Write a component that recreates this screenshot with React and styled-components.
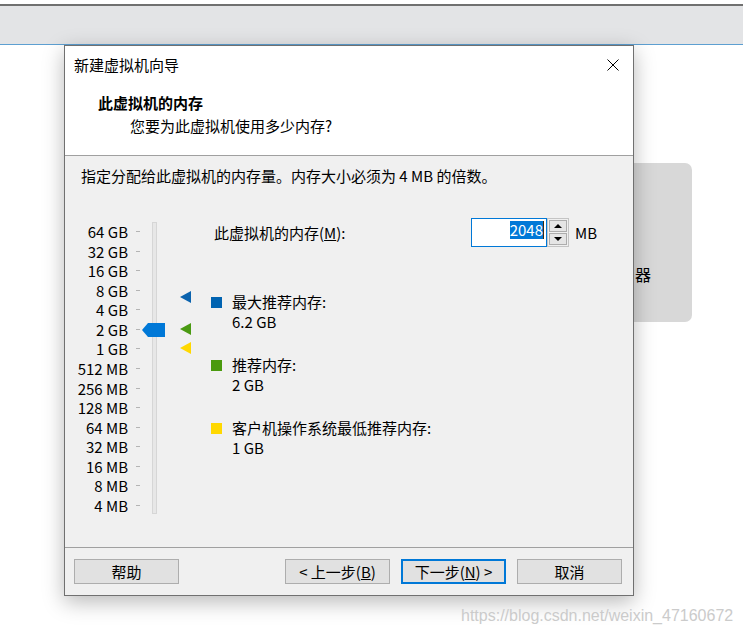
import React from 'react';
import styled, { createGlobalStyle } from 'styled-components';

const GlobalStyle = createGlobalStyle`
  html, body { margin: 0; padding: 0; background: #fff; }
  body {
    font-family: "Noto Sans CJK SC", "Noto Sans", sans-serif;
    font-size: 15px;
    color: #000;
  }
`;

const Desktop = styled.div`
  position: relative;
  width: 743px;
  height: 635px;
  overflow: hidden;
  background: #fff;
  padding-top: 4px;
  box-sizing: border-box;
`;

const TopBar = styled.div`
  height: 38px;
  background: #e3e4e6;
  border-top: 2px solid #707070;
  border-bottom: 1px solid #5d9fd1;
`;

const BackCard = styled.div`
  position: absolute;
  left: 600px;
  top: 163px;
  width: 92px;
  height: 159px;
  background: #d8d8d8;
  border-radius: 7px;
  padding: 101px 0 0 35px;
  box-sizing: border-box;
  font-size: 16px;
  line-height: 20px;
`;

const Dialog = styled.div`
  position: absolute;
  left: 64px;
  top: 45px;
  width: 570px;
  height: 551px;
  box-sizing: border-box;
  border: 1px solid #707070;
  background: #f0f0f0;
  box-shadow: 0 6px 20px rgba(0, 0, 0, 0.28);
  display: flex;
  flex-direction: column;
`;

const TitleBar = styled.div`
  height: 38px;
  flex: none;
  background: #fff;
  display: flex;
  align-items: center;
  justify-content: space-between;
  padding: 0 14px 0 9px;
  line-height: 38px;
`;

const CloseIcon = styled.svg`
  width: 12px;
  height: 12px;
  display: block;
`;

const Header = styled.div`
  flex: none;
  height: 62px;
  background: #fff;
  border-bottom: 1px solid #a0a0a0;
  padding: 9px 0 0 33px;
`;

const HeaderTitle = styled.div`
  font-weight: bold;
  line-height: 20px;
`;

const HeaderSub = styled.div`
  margin-top: 3px;
  padding-left: 32px;
  line-height: 20px;
`;

const Body = styled.div`
  flex: 1;
  padding: 10px 16px 0 16px;
`;

const Description = styled.div`
  line-height: 20px;
`;

const MainRow = styled.div`
  display: flex;
  align-items: flex-start;
  margin-top: 32px;
`;

const SliderBlock = styled.div`
  margin-top: 4px;
  display: flex;
  height: 293px;
  flex: none;
`;

const ScaleColumn = styled.div`
  width: 59px;
  display: flex;
  flex-direction: column;
`;

const ScaleRow = styled.div`
  height: 19.57px;
  display: flex;
  align-items: center;
  justify-content: flex-end;
  line-height: 19px;
  white-space: nowrap;
`;

const Tick = styled.span`
  width: 4px;
  height: 1px;
  background: #b4b4b4;
  margin-left: 8px;
  flex: none;
`;

const TrackWrap = styled.div`
  position: relative;
  margin-left: 12px;
  width: 5px;
  height: 292px;
  flex: none;
`;

const Track = styled.div`
  box-sizing: border-box;
  height: 100%;
  border: 1px solid #d6d6d6;
  background: #e7e7e7;
`;

const Thumb = styled.svg`
  position: absolute;
  left: -10px;
  width: 23px;
  height: 14px;
  display: block;
`;

const ArrowColumn = styled.div`
  position: relative;
  margin-left: 23px;
  width: 11px;
  height: 292px;
  flex: none;
`;

const Marker = styled.svg`
  position: absolute;
  left: 0;
  width: 11px;
  height: 12px;
  display: block;
`;

const RightPanel = styled.div`
  margin-left: 20px;
  flex: 1;
`;

const MemoryRow = styled.div`
  display: flex;
  align-items: center;
  height: 29px;
`;

const MemLabel = styled.div`
  margin-left: 3px;
  width: 257px;
  flex: none;
  line-height: 20px;
`;

const NumberInput = styled.div`
  width: 76px;
  height: 29px;
  box-sizing: border-box;
  border: 1px solid #0078d7;
  background: #fff;
  display: flex;
  justify-content: flex-end;
  align-items: flex-start;
  padding: 2px 2px 0 0;
`;

const Selected = styled.span`
  background: #0078d7;
  color: #fff;
  line-height: 18px;
  height: 18px;
  font-size: 15px;
`;

const Caret = styled.span`
  width: 1px;
  height: 18px;
  background: #3a2a10;
`;

const Spinner = styled.div`
  width: 22px;
  height: 29px;
  box-sizing: border-box;
  border: 1px solid #c4c4c4;
  padding: 1px;
  display: flex;
  flex-direction: column;
  gap: 1px;
`;

const SpinButton = styled.div`
  flex: 1;
  box-sizing: border-box;
  border: 1px solid #adadad;
  background: #e5e5e5;
  display: flex;
  align-items: center;
  justify-content: center;
`;

const Unit = styled.div`
  margin-left: 6px;
  line-height: 20px;
`;

const Legend = styled.div`
  margin-top: 45px;
  display: flex;
  flex-direction: column;
  gap: 23px;
`;

const LegendItem = styled.div`
  display: flex;
  align-items: flex-start;
`;

const Swatch = styled.span`
  width: 11px;
  height: 11px;
  margin-top: 5px;
  background: ${(p) => p.$color};
  flex: none;
`;

const LegendText = styled.div`
  margin-left: 10px;
  line-height: 20px;
`;

const Footer = styled.div`
  flex: none;
  border-top: 1px solid #a0a0a0;
  padding: 11px 11px 11px 9px;
  display: flex;
  gap: 11px;
`;

const Button = styled.div`
  width: 105px;
  height: 25px;
  box-sizing: border-box;
  border: ${(p) => (p.$primary ? '2px solid #0078d7' : '1px solid #adadad')};
  background: #e1e1e1;
  display: flex;
  align-items: center;
  justify-content: center;
  line-height: 20px;
  margin-left: ${(p) => (p.$push ? 'auto' : '0')};
  white-space: pre;
`;

const Watermark = styled.div`
  position: absolute;
  left: 461px;
  top: 607px;
  font-family: "Liberation Sans", sans-serif;
  font-size: 16px;
  color: #cbcbcb;
  white-space: nowrap;
`;

const scale = [
  '64 GB', '32 GB', '16 GB', '8 GB', '4 GB', '2 GB', '1 GB',
  '512 MB', '256 MB', '128 MB', '64 MB', '32 MB', '16 MB', '8 MB', '4 MB',
];
const ROW = 19.57;
const posFor = (gb) => (6 - Math.log2(gb) + 0.5) * ROW - 1;

const markers = [
  { gb: 6.2, color: '#0b63ae' },
  { gb: 2, color: '#4a9a12' },
  { gb: 1, color: '#ffd800' },
];

const legend = [
  { color: '#0063b1', label: '最大推荐内存:', value: '6.2 GB' },
  { color: '#4a9a0e', label: '推荐内存:', value: '2 GB' },
  { color: '#ffd800', label: '客户机操作系统最低推荐内存:', value: '1 GB' },
];

export default function App() {
  const thumbTop = posFor(2) + 1 - 7;
  return (
    <>
      <GlobalStyle />
      <Desktop>
        <TopBar />
        <BackCard>器</BackCard>
        <Dialog>
          <TitleBar>
            <span>新建虚拟机向导</span>
            <CloseIcon viewBox="0 0 12 12">
              <path d="M0.5 0.5 L11.5 11.5 M11.5 0.5 L0.5 11.5" stroke="#000" strokeWidth="1" fill="none" />
            </CloseIcon>
          </TitleBar>
          <Header>
            <HeaderTitle>此虚拟机的内存</HeaderTitle>
            <HeaderSub>您要为此虚拟机使用多少内存?</HeaderSub>
          </Header>
          <Body>
            <Description>指定分配给此虚拟机的内存量。内存大小必须为 4 MB 的倍数。</Description>
            <MainRow>
              <SliderBlock>
                <ScaleColumn>
                  {scale.map((s) => (
                    <ScaleRow key={s}>
                      <span>{s}</span>
                      <Tick />
                    </ScaleRow>
                  ))}
                </ScaleColumn>
                <TrackWrap>
                  <Track />
                  <Thumb viewBox="0 0 23 14" style={{ top: thumbTop }}>
                    <polygon points="0,7 6,0 23,0 23,14 6,14" fill="#0078d7" />
                  </Thumb>
                </TrackWrap>
                <ArrowColumn>
                  {markers.map((m) => (
                    <Marker key={m.gb} viewBox="0 0 11 12" style={{ top: posFor(m.gb) - 6 }}>
                      <polygon points="0,6 11,0 11,12" fill={m.color} />
                    </Marker>
                  ))}
                </ArrowColumn>
              </SliderBlock>
              <RightPanel>
                <MemoryRow>
                  <MemLabel>此虚拟机的内存(<u>M</u>):</MemLabel>
                  <NumberInput>
                    <Selected>2048</Selected>
                    <Caret />
                  </NumberInput>
                  <Spinner>
                    <SpinButton>
                      <svg width="8" height="4" viewBox="0 0 8 4"><polygon points="0,4 4,0 8,4" fill="#000" /></svg>
                    </SpinButton>
                    <SpinButton>
                      <svg width="8" height="4" viewBox="0 0 8 4"><polygon points="0,0 8,0 4,4" fill="#000" /></svg>
                    </SpinButton>
                  </Spinner>
                  <Unit>MB</Unit>
                </MemoryRow>
                <Legend>
                  {legend.map((l) => (
                    <LegendItem key={l.label}>
                      <Swatch $color={l.color} />
                      <LegendText>
                        <div>{l.label}</div>
                        <div>{l.value}</div>
                      </LegendText>
                    </LegendItem>
                  ))}
                </Legend>
              </RightPanel>
            </MainRow>
          </Body>
          <Footer>
            <Button>帮助</Button>
            <Button $push>{'< '}上一步(<u>B</u>)</Button>
            <Button $primary>下一步(<u>N</u>){' >'}</Button>
            <Button>取消</Button>
          </Footer>
        </Dialog>
        <Watermark>https://blog.csdn.net/weixin_47160672</Watermark>
      </Desktop>
    </>
  );
}
